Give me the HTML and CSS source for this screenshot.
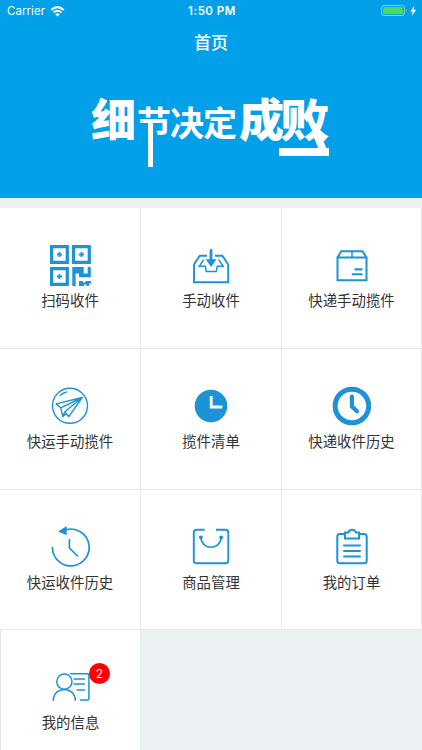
FILE: index.html
```html
<!DOCTYPE html>
<html lang="zh-CN">
<head>
<meta charset="utf-8">
<title>首页</title>
<link rel="stylesheet" href="styles.css">
</head>
<body>
<header class="hero">
  <div class="status">
    <div class="carrier"><span>Carrier</span>
      <svg class="wifi" width="15" height="11" viewBox="0 0 14 11" fill="none" stroke="#fff" stroke-width="2"><path d="M.8 4Q7-1.8 13.2 4M3.1 6.5Q7 3 10.9 6.5"/><path d="M4.8 8.2Q7 6.2 9.2 8.2L7 10.5Z" fill="#fff" stroke="none"/></svg>
    </div>
    <time>1:50 PM</time>
    <div class="power">
      <svg width="36" height="12" viewBox="381 5 36 12"><rect x="381.5" y="5.5" width="23" height="10" rx="2.5" fill="none" stroke="#7fcdf5"/><rect x="383" y="7" width="20" height="7.3" rx="1.2" fill="#4cd964"/><path d="M406 9q2 1.500 0 3z" fill="#7fcdf5"/><path d="M414.500 5.500L410.300 11.500H412.800L411.700 16L416.200 9.800H413.500Z" fill="#fff"/></svg>
    </div>
  </div>
  <h1>首页</h1>
  <div class="slogan"><span class="big">细</span><span class="mid stem">节</span><span class="mid">决</span><span class="mid wide">定</span><span class="big first">成</span><span class="big tail"><i>败</i></span></div>
</header>
<main class="grid">
  <a class="cell">
    <svg viewBox="40 239 60 52"><g stroke-width="3.200"><path d="M51.600 246.700h15.700v15.600H51.600zM73.600 246.700h15.700v15.600H73.600zM51.600 268.700h15.700v15.600H51.600z"/><path stroke-width="1.800" d="M57 254.500h5M59.500 252v5M79 254.500h5M81.500 252v5M57 276.500h5M59.500 274v5"/></g><path class="solid" d="M72.300 267H83.700V273.500H87.700V267H90.800V277.300H79V273.500H75.600V286H72.300ZM79 281H82.500L84 283L86 281H91V283.500H89V286H86.500V284.500H84V286H79Z"/></svg>
    <span>扫码收件</span>
  </a>
  <a class="cell">
    <svg viewBox="181 239 60 52"><path stroke-width="1.900" d="M207 255.800H199.800L194 264.500V282.300H228.200V264.500L222.400 255.800H215"/><path stroke-width="1.500" d="M203.700 259.700L199.300 266.300H205.300L206.300 271.500H216.200L217.300 266.300H223.100L218.700 259.700"/><path stroke-width="2.800" stroke-linecap="round" d="M211 250.500V260"/><path class="solid" d="M205.700 259.300H216.500L211.100 267Z"/></svg>
    <span>手动收件</span>
  </a>
  <a class="cell">
    <svg viewBox="321.500 239 60 52"><path stroke-width="2" d="M337 257.500H366V280.200H337ZM337 257.500L340.700 251.200H362L366 257.500"/><path stroke-width="1.500" d="M351.500 251V257"/><path stroke-width="2.100" d="M354 269.400H362M351.300 274.300H362"/></svg>
    <span>快递手动揽件</span>
  </a>
  <a class="cell">
    <svg viewBox="40 380 60 52"><g stroke-width="1.400" stroke-linejoin="round" stroke-linecap="round"><circle cx="70" cy="405.800" r="17.500"/><path d="M60 395.600Q62.500 392.800 66.500 392"/><path d="M82.200 397.500L56.200 403.900L60.700 407.800L62.800 416.500L64.800 411.800L68.800 416.700ZM60.700 407.800L82.200 397.500L64.800 411.800M62.800 416.500L66.600 413.800"/></g></svg>
    <span>快运手动揽件</span>
  </a>
  <a class="cell">
    <svg viewBox="181 380 60 52"><circle class="solid" cx="211" cy="406" r="16.300"/><path class="hands" d="M211.200 396V407H222.300"/></svg>
    <span>揽件清单</span>
  </a>
  <a class="cell">
    <svg viewBox="321.500 380 60 52"><circle cx="351.400" cy="406" r="16.800" stroke-width="5"/><path stroke-width="4.200" stroke-linecap="round" stroke-linejoin="round" d="M351.400 396.500V406.500L356.500 411.300"/></svg>
    <span>快递收件历史</span>
  </a>
  <a class="cell">
    <svg viewBox="40 521 60 52"><path stroke-width="1.700" stroke-linecap="round" d="M52.400 547.600A18.400 18.400 0 1 0 66 529.700"/><path class="solid" d="M58 531.500L66.700 526V535.200Z"/><path stroke-width="1.700" stroke-linecap="round" d="M69.400 539.500V548L77.500 556"/></svg>
    <span>快运收件历史</span>
  </a>
  <a class="cell">
    <svg viewBox="181 521 60 52"><path stroke-width="1.900" d="M204.700 529.700H196.700Q193.800 529.700 193.800 532.500V560.500Q193.800 563.300 196.700 563.300H225.500Q228.300 563.300 228.300 560.500V532.500Q228.300 529.700 225.500 529.700H216"/><path stroke-width="1.700" d="M200.800 537.500C202 550.500 220 550.500 221.200 537.500"/><circle class="solid" cx="200.900" cy="537.300" r="1.900"/><circle class="solid" cx="221.200" cy="537.300" r="1.900"/></svg>
    <span>商品管理</span>
  </a>
  <a class="cell">
    <svg viewBox="321.500 521 60 52"><g stroke-width="2"><path d="M344 534H339.300Q336.800 534 336.800 536.500V560.800Q336.800 563.300 339.300 563.300H363.700Q366.200 563.300 366.200 560.800V536.500Q366.200 534 363.700 534H359"/><path d="M344.500 538.500V532.500H348Q348.500 529.800 351.500 529.800T355.500 532.500H358.600V538.500Z"/><path stroke-linecap="round" d="M343.500 545.400H359.500M343.500 551H359.500M343.500 556.600H359.500"/></g></svg>
    <span>我的订单</span>
  </a>
  <a class="cell last">
    <svg viewBox="40.500 661 60 52"><g stroke-width="1.500" stroke-linecap="round"><circle cx="63.900" cy="681.700" r="7.600"/><path d="M52.800 700.300C53.200 685.800 74.400 685.800 74.800 700.300M70 673.700H87Q88.400 673.700 88.400 675.200V698.500Q88.400 700 87 700H80M73.500 679H84M73.500 684H84M76.500 690H84"/></g></svg>
    <span>我的信息</span>
    <b class="badge">2</b>
  </a>
</main>
</body>
</html>
```
FILE: styles.css
```css
* { box-sizing: border-box; }

body {
  margin: 0;
  height: 750px;
  overflow: hidden;
  background: #ebf0f3;
  color: #333;
  font-family: Inter, "Noto Sans CJK SC", sans-serif;
}

.hero {
  height: 198px;
  background: #02a0e9;
  color: #fff;
}

.status {
  display: grid;
  grid-template-columns: 1fr auto 1fr;
  align-items: center;
  height: 22px;
  padding: 0 5px 0 7px;
  font-size: 11.500px;
}

.carrier {
  display: flex;
  align-items: center;
  gap: 5px;
  letter-spacing: .05px;
}

.status time {
  font-weight: 600;
  letter-spacing: .5px;
}

.power {
  display: flex;
  justify-content: flex-end;
}

h1 {
  margin: 0;
  height: 42px;
  font: 500 17px/40px "Noto Sans CJK SC", sans-serif;
  text-align: center;
}

.slogan {
  display: flex;
  align-items: flex-start;
  padding: 28px 0 0 91px;
  font-family: "Noto Sans CJK SC", sans-serif;
  font-weight: 900;
}

.slogan span {
  position: relative;
  flex: none;
}

.big {
  width: 46px;
  font-size: 45px;
  line-height: 52px;
}

.mid {
  width: 33px;
  font-size: 34px;
  line-height: 60px;
  font-weight: 700;
}

.wide { width: 36px; }

.stem::after {
  content: "";
  position: absolute;
  left: 11px;
  top: 30px;
  width: 5px;
  height: 45px;
  background: #fff;
}

.first { width: 41px; }

.tail i {
  display: block;
  font-style: normal;
  transform: scaleX(1.100);
  transform-origin: left;
}

.tail::before {
  content: "";
  position: absolute;
  left: 37px;
  top: 42px;
  width: 8px;
  height: 22px;
  background: #fff;
  transform: skewX(22deg);
}

.tail::after {
  content: "";
  position: absolute;
  left: -1px;
  top: 56px;
  width: 50px;
  height: 8px;
  background: #fff;
}

.grid {
  display: grid;
  grid-template-columns: 141px 141px 140px;
  grid-template-rows: 141px 141px 140px 141px;
  margin-top: 10px;
}

.cell {
  position: relative;
  display: flex;
  flex-direction: column;
  align-items: center;
  padding-top: 31px;
  background: #fff;
  border-right: 1px solid #e7e9ea;
  border-bottom: 1px solid #e2e4e5;
}

.last { border-left: 1px solid #e2e4e5; }

.cell svg {
  width: 60px;
  height: 52px;
  fill: none;
  stroke: #1b93d6;
}

.cell .solid {
  fill: #1b93d6;
  stroke: none;
}

.cell .hands {
  stroke: #fff;
  stroke-width: 2.800;
}

.cell span {
  margin-top: -1px;
  font: 400 14.400px/20px "Noto Sans CJK SC", sans-serif;
}

.badge {
  position: absolute;
  left: 88px;
  top: 33px;
  width: 21px;
  height: 21px;
  border-radius: 50%;
  background: #fe0000;
  color: #fff;
  font: 400 12px/21px Inter, sans-serif;
  text-align: center;
}
```
